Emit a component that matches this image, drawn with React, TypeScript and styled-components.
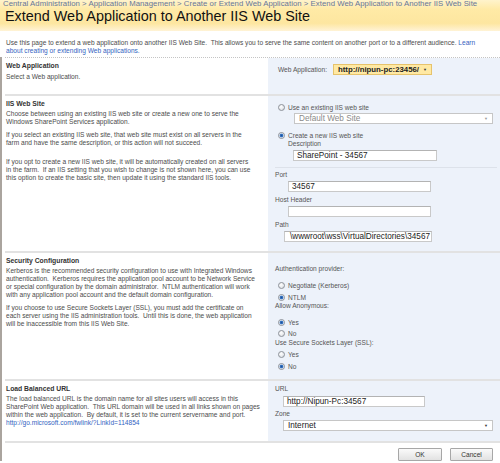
import React from "react"
import styled, { createGlobalStyle } from "styled-components"

const GlobalStyle = createGlobalStyle`
    html, body {
        margin: 0;
        padding: 0;
        background: #fff;
    }
    body {
        font-family: "Liberation Sans", Arial, sans-serif;
        color: #4c4c4c;
    }
    * { box-sizing: border-box; }
`

export default function App(){
    return(
        <Page>
            <GlobalStyle />
            <Header>
                <Crumbs>Central Administration &gt; Application Management &gt; Create or Extend Web Application &gt; Extend Web Application to Another IIS Web Site</Crumbs>
                <Title>Extend Web Application to Another IIS Web Site</Title>
            </Header>
            <Intro>
                {"Use this page to extend a web application onto another IIS Web Site.  This allows you to serve the same content on another port or to a different audience. "}
                <Link>Learn</Link>
                <br />
                <Link>about creating or extending Web applications.</Link>
            </Intro>

            <Form>
                <Section $first>
                    <Info>
                        <Heading>Web Application</Heading>
                        <Para $mt={3}>Select a Web application.</Para>
                    </Info>
                    <Panel $pb={19}>
                        <AppPicker>
                            <Label>Web Application:</Label>
                            <AppSelect>
                                http://nipun-pc:23456/
                                <Caret>▼</Caret>
                            </AppSelect>
                        </AppPicker>
                    </Panel>
                </Section>

                <Section>
                    <Info>
                        <Heading>IIS Web Site</Heading>
                        <Para $mt={2}>{"Choose between using an existing IIS web site or create a new one to serve the\nWindows SharePoint Services application."}</Para>
                        <Para $mt={5}>{"If you select an existing IIS web site, that web site must exist on all servers in the\nfarm and have the same description, or this action will not succeed."}</Para>
                        <Para $mt={11}>{"If you opt to create a new IIS web site, it will be automatically created on all servers\nin the farm.  If an IIS setting that you wish to change is not shown here, you can use\nthis option to create the basic site, then update it using the standard IIS tools."}</Para>
                    </Info>
                    <Panel $pb={9}>
                        <Choice $mt={7}><Radio />Use an existing IIS web site</Choice>
                        <Select $mt={2} $ml={26} $w={199} $muted>Default Web Site<Caret $muted>▼</Caret></Select>
                        <Choice $mt={7}><Radio $on />Create a new IIS web site</Choice>
                        <Label $mt={1} $ml={20}>Description</Label>
                        <Input $mt={2} $ml={25} $w={144}>SharePoint - 34567</Input>
                        <Divider />
                        <Label $mt={3} $ml={7}>Port</Label>
                        <Input $mt={2} $ml={20} $w={143}>34567</Input>
                        <Label $mt={4} $ml={7}>Host Header</Label>
                        <Input $mt={2} $ml={20} $w={143}></Input>
                        <Label $mt={4} $ml={7}>Path</Label>
                        <Input $mt={2} $ml={16} $w={148} $end>\wwwroot\wss\VirtualDirectories\34567</Input>
                    </Panel>
                </Section>

                <Section>
                    <Info>
                        <Heading>Security Configuration</Heading>
                        <Para $mt={2}>{"Kerberos is the recommended security configuration to use with Integrated Windows\nauthentication.  Kerberos requires the application pool account to be Network Service\nor special configuration by the domain administrator.  NTLM authentication will work\nwith any application pool account and the default domain configuration."}</Para>
                        <Para $mt={5}>{"If you choose to use Secure Sockets Layer (SSL), you must add the certificate on\neach server using the IIS administration tools.  Until this is done, the web application\nwill be inaccessible from this IIS Web Site."}</Para>
                    </Info>
                    <Panel $pb={9}>
                        <Label $mt={12} $ml={7}>Authentication provider:</Label>
                        <Choice $mt={8}><Radio />Negotiate (Kerberos)</Choice>
                        <Choice $mt={4}><Radio $on />NTLM</Choice>
                        <Label $mt={1} $ml={7}>Allow Anonymous:</Label>
                        <Choice $mt={8}><Radio $on />Yes</Choice>
                        <Choice $mt={3}><Radio />No</Choice>
                        <Label $mt={2} $ml={7}>Use Secure Sockets Layer (SSL):</Label>
                        <Choice $mt={3}><Radio />Yes</Choice>
                        <Choice $mt={4}><Radio $on />No</Choice>
                    </Panel>
                </Section>

                <Section>
                    <Info>
                        <Heading>Load Balanced URL</Heading>
                        <Para $mt={2}>{"The load balanced URL is the domain name for all sites users will access in this\nSharePoint Web application.  This URL domain will be used in all links shown on pages\nwithin the web application.  By default, it is set to the current servername and port."}</Para>
                        <Para><Link>http://go.microsoft.com/fwlink/?LinkId=114854</Link></Para>
                    </Info>
                    <Panel $pb={10}>
                        <Label $mt={4} $ml={7}>URL</Label>
                        <Input $mt={3} $ml={15} $w={142}>http://Nipun-Pc:34567</Input>
                        <Label $mt={3} $ml={7}>Zone</Label>
                        <Select $mt={2} $ml={15} $w={210}>Internet<Caret>▼</Caret></Select>
                    </Panel>
                </Section>
                <Actions>
                    <Button $w={44}>OK</Button>
                    <Button $w={43}>Cancel</Button>
                </Actions>
            </Form>
        </Page>
    )
}

const Page = styled.div`
    width: 500px;
    height: 463px;
    overflow: hidden;
`

const Header = styled.div`
    height: 31px;
    padding: 0 3px;
    background: linear-gradient(#fff3cc 0%, #ffeaa6 30%, #fde6a0 75%, #fff3d6 100%);
`

const Crumbs = styled.div`
    font-size: 7.75px;
    line-height: 8px;
    color: #66769a;
    white-space: nowrap;
    letter-spacing: 0.05px;
`

const Title = styled.h1`
    margin: -1px 0 0 2px;
    font-size: 14.4px;
    line-height: 18px;
    font-weight: normal;
    color: #111;
    white-space: nowrap;
`

const Intro = styled.div`
    padding: 8px 0 0 6px;
    height: 26px;
    font-size: 6.6px;
    line-height: 8px;
    white-space: pre;
    color: #4c4c4c;
`

const Link = styled.span`
    color: #3364bf;
`

const Form = styled.div`
    border-left: 2px solid #aaa49e;
    padding-left: 3px;
`

const Section = styled.div<{ $first?: boolean }>`
    display: grid;
    grid-template-columns: 263px 1fr;
    border-top: ${p => p.$first ? "1px dotted #c4c4c4" : "2px solid #e2e2e2"};
    &:nth-last-child(2) {
        border-bottom: 2px solid #e2e2e2;
    }
`

const Info = styled.div`
    padding: 2px 0 0 1px;
    white-space: pre;
`

const Heading = styled.div`
    font-size: 6.8px;
    line-height: 9px;
    font-weight: bold;
    color: #333;
    padding-top: 1px;
`

const Para = styled.div<{ $mt?: number }>`
    margin-top: ${p => p.$mt ?? 0}px;
    font-size: 6.6px;
    line-height: 8px;
`

const Panel = styled.div<{ $pb: number }>`
    background: #edf2fa;
    display: flex;
    flex-direction: column;
    padding-bottom: ${p => p.$pb}px;
`

const AppPicker = styled.div`
    display: flex;
    align-items: center;
    gap: 6px;
    margin: 6px 0 0 10px;
`

const Label = styled.div<{ $mt?: number, $ml?: number }>`
    margin: ${p => p.$mt ?? 0}px 0 0 ${p => p.$ml ?? 0}px;
    font-size: 6.6px;
    line-height: 8px;
    color: #555;
    white-space: nowrap;
`

const AppSelect = styled.div`
    display: flex;
    align-items: center;
    gap: 4px;
    height: 11px;
    padding: 0 4px;
    background: #ffe9a3;
    border: 1px solid #e6c36c;
    font-size: 7.8px;
    font-weight: bold;
    color: #222;
    white-space: nowrap;
`

const Caret = styled.span<{ $muted?: boolean }>`
    font-size: 4px;
    color: ${p => p.$muted ? "#999" : "#333"};
    margin-left: auto;
`

const Choice = styled.div<{ $mt: number }>`
    display: flex;
    align-items: center;
    gap: 3px;
    margin: ${p => p.$mt}px 0 0 10px;
    height: 8px;
    font-size: 6.6px;
    color: #555;
    white-space: nowrap;
`

const Radio = styled.span<{ $on?: boolean }>`
    width: 7px;
    height: 7px;
    border-radius: 50%;
    border: 1px solid #8d9299;
    background: ${p => p.$on
        ? "radial-gradient(circle, #1f4f95 0, #3c7ccc 1.6px, #e8eef6 2.2px, #d9dee6 100%)"
        : "radial-gradient(circle at 40% 35%, #fff 0, #e6e8ec 60%, #cfd3d9 100%)"};
    flex: none;
`

const Input = styled.div<{ $mt: number, $ml: number, $w: number, $end?: boolean }>`
    display: flex;
    align-items: center;
    justify-content: ${p => p.$end ? "flex-end" : "flex-start"};
    margin: ${p => p.$mt}px 0 0 ${p => p.$ml}px;
    width: ${p => p.$w}px;
    height: 11px;
    padding: 0 ${p => p.$end ? 1 : 3}px;
    overflow: hidden;
    background: #fff;
    border: 1px solid #c9c9c9;
    border-top-color: #b3b3b3;
    font-size: 8.2px;
    color: #222;
    white-space: nowrap;
`

const Select = styled.div<{ $mt: number, $ml: number, $w: number, $muted?: boolean }>`
    display: flex;
    align-items: center;
    margin: ${p => p.$mt}px 0 0 ${p => p.$ml}px;
    width: ${p => p.$w}px;
    height: 11px;
    padding: 0 4px;
    background: #fff;
    border: 1px solid #c6c6c6;
    font-size: 8.2px;
    color: ${p => p.$muted ? "#8a8a8a" : "#222"};
    white-space: nowrap;
`

const Divider = styled.div`
    margin: 6px 3px 0 7px;
    height: 1px;
    background: #dde2ea;
`

const Actions = styled.div`
    display: flex;
    justify-content: flex-end;
    gap: 8px;
    padding: 5px 7px 0 0;
`

const Button = styled.button<{ $w: number }>`
    width: ${p => p.$w}px;
    height: 13px;
    padding: 0;
    border: 1px solid #a7a7a7;
    border-radius: 1px;
    background: linear-gradient(#fafafa, #e2e2e2);
    font-family: "Liberation Sans", Arial, sans-serif;
    font-size: 6.6px;
    color: #333;
`
